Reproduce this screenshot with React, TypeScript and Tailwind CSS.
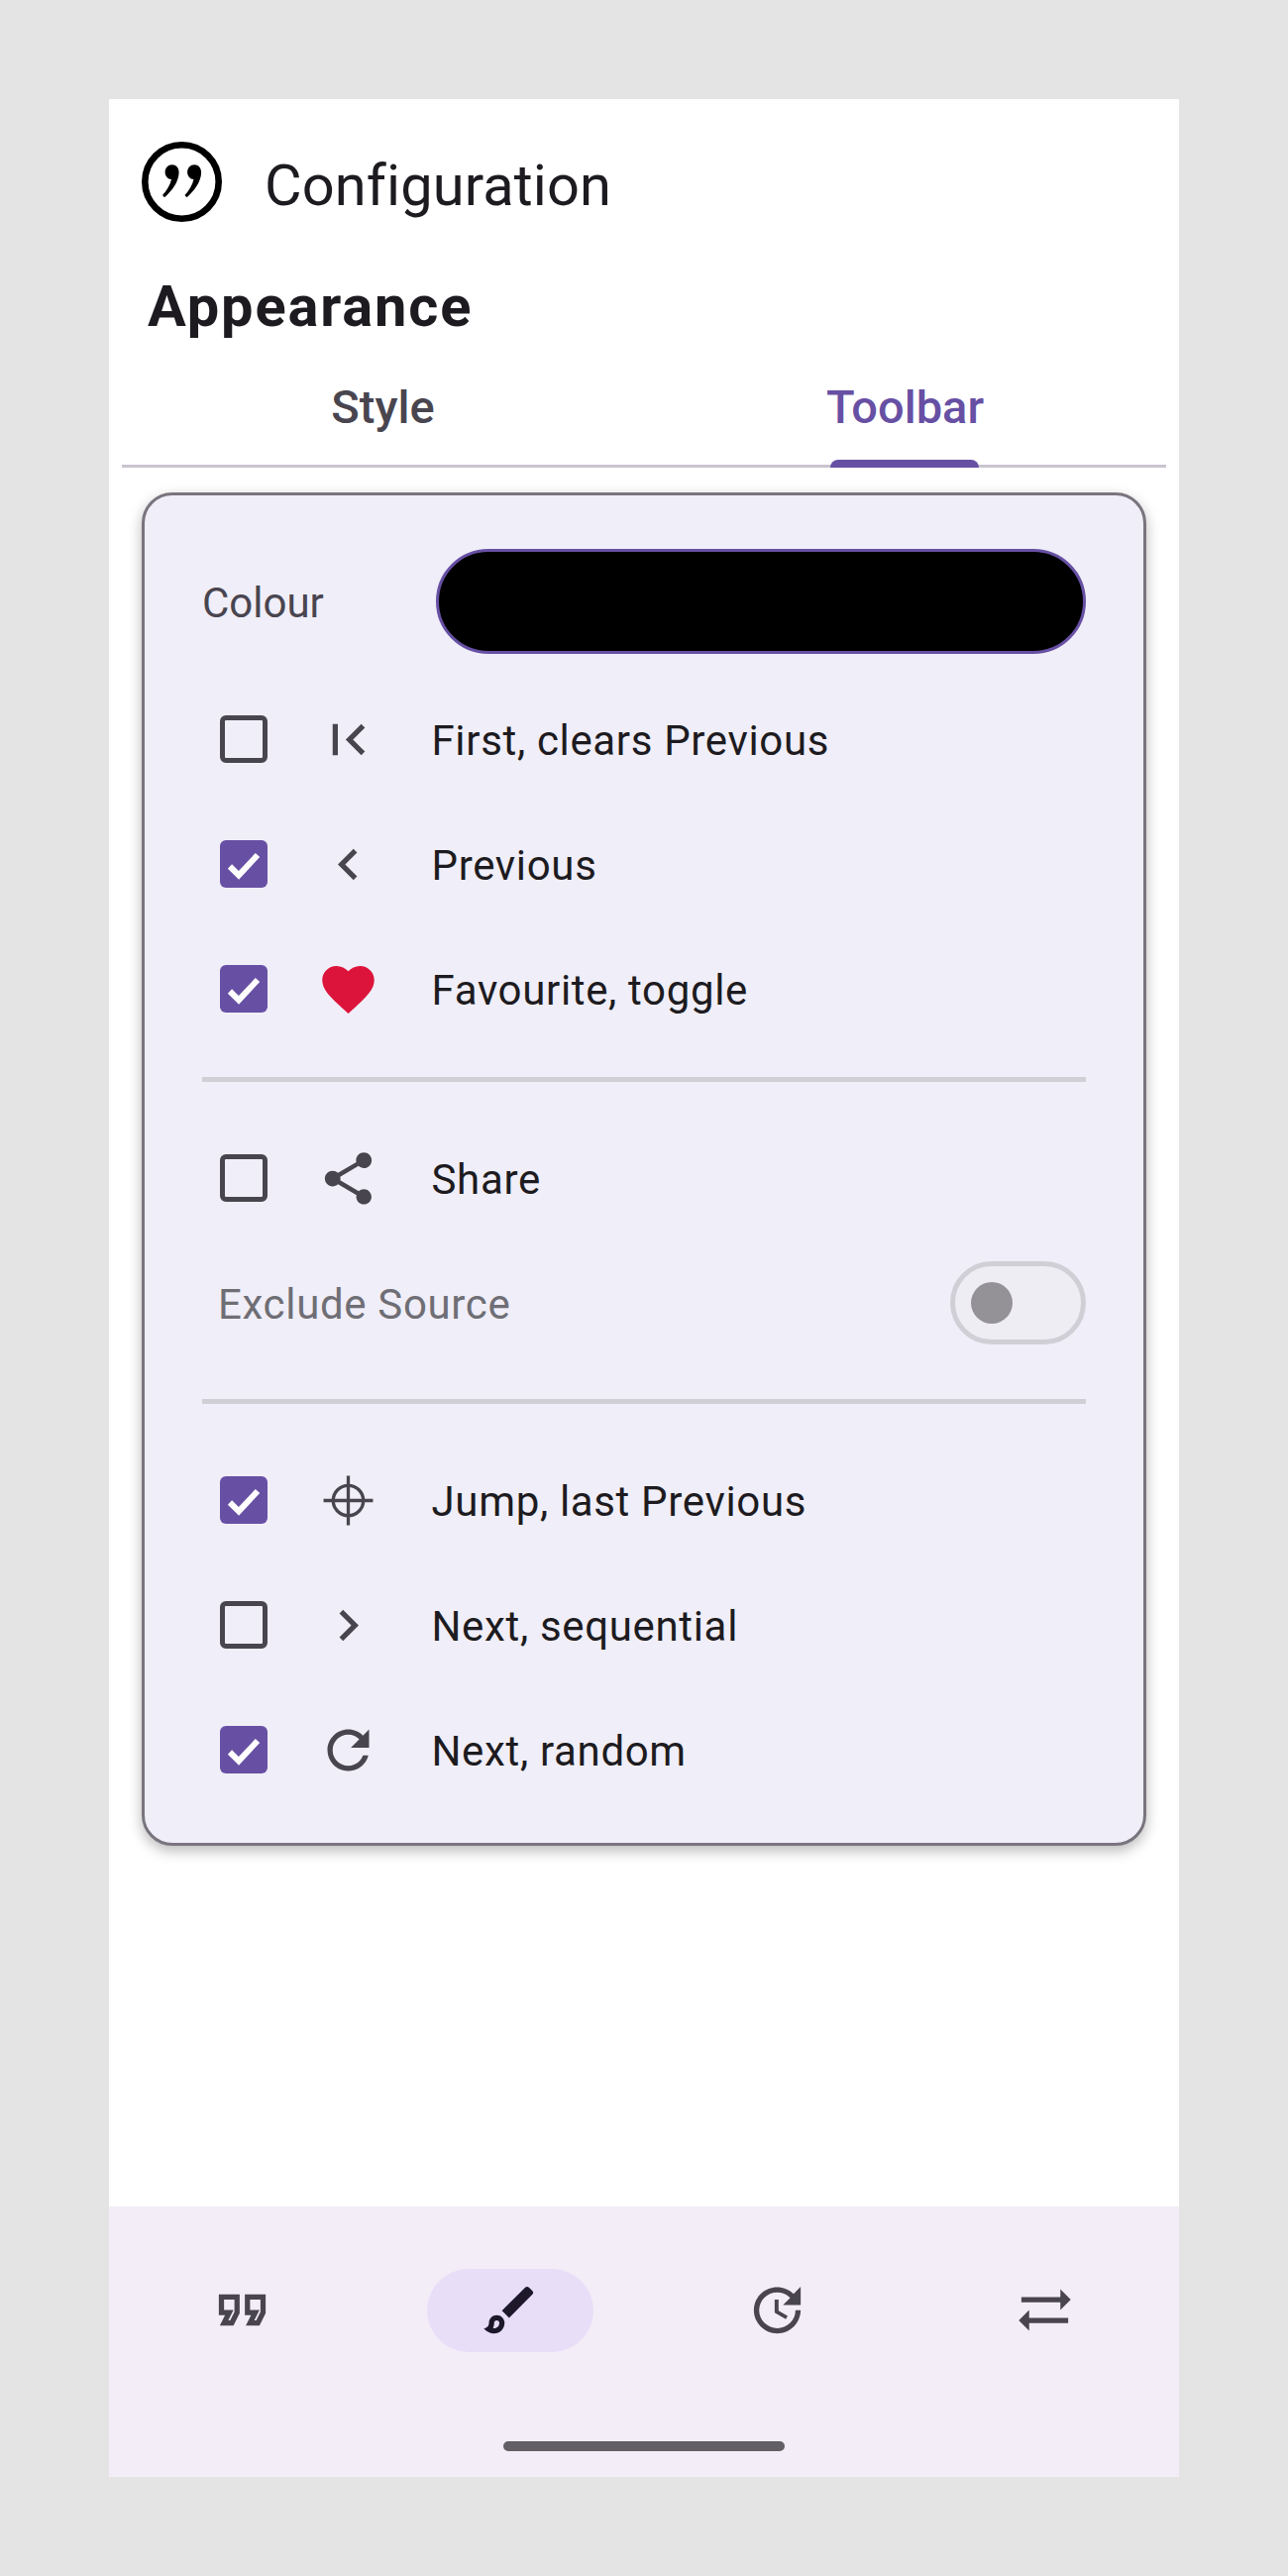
import React from "react";

const ink = "#49454f";

function Glyph({ d, color = ink, size = 63 }: { d: string; color?: string; size?: number }) {
  return (
    <svg width={size} height={size} viewBox="0 0 24 24" fill={color} className="block shrink-0">
      <path d={d} />
    </svg>
  );
}

const paths = {
  first: "M18.41 16.59L13.82 12l4.59-4.59L17 6l-6 6 6 6zM6 6h2v12H6z",
  prev: "M15.41 7.41L14 6l-6 6 6 6 1.41-1.41L10.83 12z",
  next: "M10 6L8.59 7.41 13.17 12l-4.58 4.59L10 18l6-6z",
  heart: "M12 21.35l-1.45-1.32C5.4 15.36 2 12.28 2 8.5 2 5.42 4.42 3 7.5 3c1.74 0 3.41.81 4.5 2.09C13.09 3.81 14.76 3 16.5 3 19.58 3 22 5.42 22 8.5c0 3.78-3.4 6.86-8.55 11.54L12 21.35z",
  share: "M18 16.08c-.76 0-1.44.3-1.96.77L8.91 12.7c.05-.23.09-.46.09-.7s-.04-.47-.09-.7l7.05-4.11c.54.5 1.25.81 2.04.81 1.66 0 3-1.34 3-3s-1.34-3-3-3-3 1.34-3 3c0 .24.04.47.09.7L8.04 9.81C7.5 9.31 6.79 9 6 9c-1.66 0-3 1.34-3 3s1.34 3 3 3c.79 0 1.5-.31 2.04-.81l7.12 4.16c-.05.21-.08.43-.08.65 0 1.61 1.31 2.92 2.92 2.92s2.92-1.31 2.92-2.92-1.31-2.92-2.92-2.92z",
  refresh: "M17.65 6.35C16.2 4.9 14.21 4 12 4c-4.42 0-7.99 3.58-7.99 8s3.57 8 7.99 8c3.73 0 6.84-2.55 7.73-6h-2.08c-.82 2.33-3.04 4-5.65 4-3.31 0-6-2.69-6-6s2.69-6 6-6c1.66 0 3.14.69 4.22 1.78L13 11h7V4l-2.35 2.35z",
  quote: "M18.62 18h-5.24l2-4H13V6h8v7.24L18.62 18zm-2-2h.76L19 12.76V8h-4v4h3.62l-2 4zm-8 2H3.38l2-4H3V6h8v7.24L8.62 18zm-2-2h.76L9 12.76V8H5v4h3.62l-2 4z",
  brush: "M7 16c.55 0 1 .45 1 1 0 1.1-.9 2-2 2-.17 0-.33-.02-.5-.05.31-.55.5-1.21.5-1.95 0-.55.45-1 1-1M18.67 3c-.26 0-.51.1-.71.29L9 12.25 11.75 15l8.96-8.96c.39-.39.39-1.02 0-1.41l-1.34-1.34c-.2-.2-.45-.29-.7-.29zM7 14c-1.66 0-3 1.34-3 3 0 1.31-1.16 2-2 2 .92 1.22 2.49 2 4 2 2.21 0 4-1.79 4-4 0-1.66-1.34-3-3-3z",
  update: "M21 10.12h-6.78l2.74-2.82c-2.73-2.7-7.15-2.8-9.88-.1-2.73 2.71-2.73 7.08 0 9.79s7.15 2.71 9.88 0C18.32 15.65 19 14.08 19 12.1h2c0 1.98-.88 4.55-2.64 6.29-3.51 3.48-9.21 3.48-12.72 0-3.5-3.47-3.53-9.11-.02-12.58s9.14-3.47 12.65 0L21 3v7.12zM12.5 8v4.25l3.5 2.08-.72 1.21L11 13V8h1.5z",
  sync: "M22 8l-4-4v3H3v2h15v3l4-4zM2 16l4 4v-3h15v-2H6v-3l-4 4z",
};

function Crosshair() {
  return (
    <svg width={63} height={63} viewBox="0 0 24 24" fill="none" stroke={ink} strokeWidth={1.25} className="block shrink-0">
      <circle cx="12" cy="12" r="5.8" />
      <path d="M12 2.5v19M2.5 12h19" />
    </svg>
  );
}

function Box({ checked }: { checked: boolean }) {
  if (checked) {
    return (
      <div className="w-[48px] h-[48px] rounded-[6px] bg-[#6750a4] shrink-0">
        <svg width={48} height={48} viewBox="0 0 48 48" fill="none" stroke="#ffffff" strokeWidth={6} className="block">
          <path d="M10 26.5L19 35.4L38 15" />
        </svg>
      </div>
    );
  }
  return <div className="w-[48px] h-[48px] rounded-[6px] border-[5.25px] border-[#49454f] shrink-0" />;
}

function Row({ checked, icon, label }: { checked: boolean; icon: React.ReactNode; label: string }) {
  return (
    <div className="flex items-center h-[126px] pl-[18px]">
      <Box checked={checked} />
      <div className="ml-[49.5px] w-[63px] shrink-0">{icon}</div>
      <span className="ml-[53px] pt-[3px] text-[42px] leading-[56px] tracking-[0.66px] text-[#1d1b20]">{label}</span>
    </div>
  );
}

function Divider() {
  return <div className="h-[5px] bg-[#d1cfd6]" />;
}

function Logo() {
  return (
    <svg width={81} height={81} viewBox="0 0 81 81" className="block shrink-0">
      <circle cx="40.5" cy="40.5" r="37.2" fill="none" stroke="#000000" strokeWidth={6.6} />
      <path d="M30.7 23.3C34.8 23.3 37.6 26.6 37.6 31C37.6 41 29.5 50.6 23 56.2L21 54C25.2 49.5 28.6 44 30 38C26.4 38 23.6 34.8 23.6 30.8C23.6 26.8 26.6 23.3 30.7 23.3Z" fill="#000000" />
      <path d="M53.2 23.3C57.3 23.3 60.1 26.6 60.1 31C60.1 41 52 50.6 45.5 56.2L43.5 54C47.7 49.5 51.1 44 52.5 38C48.9 38 46.1 34.8 46.1 30.8C46.1 26.8 49.1 23.3 53.2 23.3Z" fill="#000000" />
    </svg>
  );
}

function NavItem({ d, active }: { d: string; active?: boolean }) {
  return (
    <div className="flex-1 flex justify-center">
      <div className={"w-[168px] h-[84px] rounded-full flex items-center justify-center " + (active ? "bg-[#e8def8]" : "")}>
        <div className="mb-[1px] mr-[1px]">
          <Glyph d={d} color={active ? "#1d192b" : ink} />
        </div>
      </div>
    </div>
  );
}

export default function App() {
  return (
    <div className="w-[1300px] h-[2600px] bg-[#e4e4e4] pt-[100px] px-[110px]" style={{ fontFamily: "Roboto, sans-serif" }}>
      <div className="w-[1080px] h-[2400px] bg-white flex flex-col">
        <header className="h-[166px] flex items-center pl-[33px]">
          <Logo />
          <h1 className="ml-[43px] pt-[8px] text-[57.75px] leading-[72px] tracking-[0.13px] font-normal text-[#1d1b20]">Configuration</h1>
        </header>

        <h2 className="mt-[7px] pl-[39px] text-[57.75px] leading-[72px] tracking-[1.85px] font-bold text-[#1d1b20]">Appearance</h2>

        <div className="mx-[13px] flex h-[127px] border-b-[3px] border-[#cac4d0]">
          <div className="flex-1 flex items-center justify-center pt-[8px]">
            <span className="text-[47px] leading-[56px] font-medium text-[#49454f]">Style</span>
          </div>
          <div className="flex-1 flex items-center justify-center pt-[8px] relative">
            <span className="text-[47px] leading-[56px] font-medium text-[#6750a4]">Toolbar</span>
            <div className="absolute bottom-[-3px] left-[187.5px] w-[150.5px] h-[8px] rounded-t-[8px] bg-[#6750a4]" />
          </div>
        </div>

        <main className="flex-1">
          <section className="mt-[25px] mx-[33px] h-[1366px] rounded-[31px] border-[3px] border-[#79747e] bg-[#f0eef8] shadow-[0_5px_14px_rgba(0,0,0,0.28)] px-[58px] pt-[54px]">
            <div className="flex items-center">
              <span className="w-[236px] shrink-0 pt-[4px] text-[42px] leading-[56px] text-[#49454f]">Colour</span>
              <div className="flex-1 h-[106px] rounded-full bg-black border-[3px] border-[#6750a4]" />
            </div>
            <div className="mt-[23px]">
              <Row checked={false} icon={<Glyph d={paths.first} />} label="First, clears Previous" />
              <Row checked icon={<Glyph d={paths.prev} />} label="Previous" />
              <Row checked icon={<Glyph d={paths.heart} color="#dc143c" />} label="Favourite, toggle" />
            </div>
            <div className="mt-[26px]">
              <Divider />
            </div>
            <div className="mt-[34px]">
              <Row checked={false} icon={<Glyph d={paths.share} />} label="Share" />
              <div className="flex items-center justify-between h-[126px] pl-[16px]">
                <span className="pt-[3px] text-[42px] leading-[56px] tracking-[0.66px] text-[#6f6e75]">Exclude Source</span>
                <div className="w-[137px] h-[84px] rounded-full border-[5px] border-[#d1cfd6] bg-[#efedf4] flex items-center pl-[16px]">
                  <div className="w-[42px] h-[42px] rounded-full bg-[#949297]" />
                </div>
              </div>
            </div>
            <div className="mt-[34px]">
              <Divider />
            </div>
            <div className="mt-[34px]">
              <Row checked icon={<Crosshair />} label="Jump, last Previous" />
              <Row checked={false} icon={<Glyph d={paths.next} />} label="Next, sequential" />
              <Row checked icon={<Glyph d={paths.refresh} />} label="Next, random" />
            </div>
          </section>
        </main>

        <nav className="h-[273px] bg-[#f3edf7] flex flex-col">
          <div className="flex pt-[63px]">
            <NavItem d={paths.quote} />
            <NavItem d={paths.brush} active />
            <NavItem d={paths.update} />
            <NavItem d={paths.sync} />
          </div>
          <div className="mt-[90px] mx-auto w-[284px] h-[10px] rounded-full bg-[#625f65]" />
        </nav>
      </div>
    </div>
  );
}
